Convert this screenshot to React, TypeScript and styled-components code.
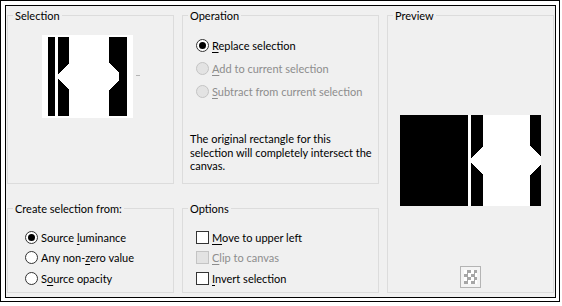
import React from 'react'
import styled, { createGlobalStyle } from 'styled-components'

const GlobalStyle = createGlobalStyle`
	*, *::before, *::after {
		box-sizing: border-box;
	}
	html, body {
		margin: 0;
		padding: 0;
		background: #fff;
	}
	body {
		font-family: Lato, 'Noto Sans', sans-serif;
		font-size: 11px;
		color: #000;
	}
`

type Choice = {
	label: React.ReactNode
	checked?: boolean
	disabled?: boolean
}

const operations: Choice[] = [
	{ label: <><u>R</u>eplace selection</>, checked: true },
	{ label: <><u>A</u>dd to current selection</>, disabled: true },
	{ label: <><u>S</u>ubtract from current selection</>, disabled: true }
]

const sources: Choice[] = [
	{ label: <>Source <u>l</u>uminance</>, checked: true },
	{ label: <>Any non-<u>z</u>ero value</> },
	{ label: <>S<u>o</u>urce opacity</> }
]

const options: Choice[] = [
	{ label: <><u>M</u>ove to upper left</> },
	{ label: <><u>C</u>lip to canvas</>, disabled: true },
	{ label: <><u>I</u>nvert selection</> }
]

const ThumbImage = () => (
	<svg width='91' height='83' viewBox='0 0 91 83' shapeRendering='crispEdges'>
		<rect width='91' height='83' fill='#fff' />
		<rect x='6' y='2' width='7' height='79' fill='#000' />
		<rect x='16' y='2' width='11' height='79' fill='#000' />
		<rect x='67' y='2' width='18' height='79' fill='#000' />
		<polygon points='27,28 15,41 15,42 27,55 67,55 77,45 77,38 67,28' fill='#fff' />
	</svg>
)

const PreviewImage = () => (
	<svg width='141' height='91' viewBox='0 0 141 91' shapeRendering='crispEdges'>
		<rect width='141' height='91' fill='#000' />
		<rect x='68' y='0' width='3' height='91' fill='#fff' />
		<rect x='83' y='0' width='47' height='91' fill='#fff' />
		<polygon points='83,31 69,45 69,46 83,60 130,60 141,50 141,42 130,31' fill='#fff' />
	</svg>
)

const SelectionDialog = () => (
	<Frame>
		<Dialog>
			<Group $area='sel'>
				<Legend>Selection</Legend>
				<Body $pad='12px 0 0 34px'>
					<ThumbRow>
						<ThumbImage />
						<DropMark />
					</ThumbRow>
				</Body>
			</Group>

			<Group $area='op'>
				<Legend>Operation</Legend>
				<Body $pad='11px 0 0 7px'>
					<ChoiceList $indent={6}>
						{operations.map((o, i) => (
							<ChoiceRow key={i} $height={23} $disabled={o.disabled}>
								<RadioMark $checked={o.checked} $disabled={o.disabled} />
								<span>{o.label}</span>
							</ChoiceRow>
						))}
					</ChoiceList>
					<Description>
						The original rectangle for this
						<br />
						selection will completely intersect the
						<br />
						canvas.
					</Description>
				</Body>
			</Group>

			<Group $area='prev'>
				<Legend>Preview</Legend>
				<PreviewBody>
					<PreviewBox>
						<PreviewImage />
					</PreviewBox>
					<CheckerButton>
						<Checker />
					</CheckerButton>
				</PreviewBody>
			</Group>

			<Group $area='src'>
				<Legend>Create selection from:</Legend>
				<Body $pad='11px 0 0 17px'>
					<ChoiceList $indent={0}>
						{sources.map((o, i) => (
							<ChoiceRow key={i} $height={20.5} $disabled={o.disabled}>
								<RadioMark $checked={o.checked} $disabled={o.disabled} />
								<span>{o.label}</span>
							</ChoiceRow>
						))}
					</ChoiceList>
				</Body>
			</Group>

			<Group $area='opt'>
				<Legend>Options</Legend>
				<Body $pad='11px 0 0 13px'>
					<ChoiceList $indent={0}>
						{options.map((o, i) => (
							<ChoiceRow key={i} $height={20.5} $disabled={o.disabled}>
								<CheckMark $disabled={o.disabled} />
								<span>{o.label}</span>
							</ChoiceRow>
						))}
					</ChoiceList>
				</Body>
			</Group>
		</Dialog>
	</Frame>
)

const App = () => (
	<>
		<GlobalStyle />
		<SelectionDialog />
	</>
)

const Frame = styled.div`
	width: 560px;
	height: 302px;
	border: 1px solid #000;
	padding: 4px 3px 3px 4px;
	display: flex;
	background: #fff;
`

const Dialog = styled.div`
	flex: 1;
	border: 1px solid #000;
	background: #f0f0f0;
	display: grid;
	grid-template-columns: 167px 197px 167px;
	grid-template-rows: 176px 92px;
	grid-template-areas:
		'sel op prev'
		'src opt prev';
	column-gap: 8px;
	row-gap: 17px;
	padding: 2px 1px 4px 1px;
`

const Group = styled.fieldset<{ $area: string }>`
	grid-area: ${(p) => p.$area};
	margin: 0;
	min-width: 0;
	border: 1px solid #dcdcdc;
	padding: 0;
	display: flex;
	flex-direction: column;
`

const Legend = styled.legend`
	margin-left: 5px;
	padding: 0 2px;
	font-size: 12px;
	line-height: 15px;
	font-size: 11px;
`

const Body = styled.div<{ $pad: string }>`
	flex: 1;
	display: flex;
	flex-direction: column;
	align-items: flex-start;
	padding: ${(p) => p.$pad};
`

const PreviewBody = styled.div`
	flex: 1;
	display: flex;
	flex-direction: column;
	align-items: center;
`

const ThumbRow = styled.div`
	display: flex;
	align-items: center;
	gap: 3px;

	svg {
		display: block;
	}
`

const DropMark = styled.span`
	width: 4px;
	height: 1px;
	background: #b4b4b4;
	margin-top: -2px;
`

const ChoiceList = styled.div<{ $indent: number }>`
	display: flex;
	flex-direction: column;
	margin-left: ${(p) => p.$indent}px;
`

const ChoiceRow = styled.label<{ $height: number; $disabled?: boolean }>`
	display: flex;
	align-items: center;
	gap: 3px;
	height: ${(p) => p.$height}px;
	color: ${(p) => (p.$disabled ? '#8d8d8d' : '#000')};
	white-space: nowrap;

	u {
		text-underline-offset: 2px;
	}
`

const RadioMark = styled.span<{ $checked?: boolean; $disabled?: boolean }>`
	flex: none;
	width: 13px;
	height: 13px;
	border-radius: 50%;
	border: 1px solid ${(p) => (p.$disabled ? '#c4c4c4' : '#333')};
	background: ${(p) => (p.$disabled ? '#e3e3e3' : '#fff')};
	display: flex;
	align-items: center;
	justify-content: center;

	&::after {
		content: '';
		display: ${(p) => (p.$checked ? 'block' : 'none')};
		width: 7px;
		height: 7px;
		border-radius: 50%;
		background: #000;
	}
`

const CheckMark = styled.span<{ $disabled?: boolean }>`
	flex: none;
	width: 13px;
	height: 13px;
	border: 1px solid ${(p) => (p.$disabled ? '#c4c4c4' : '#333')};
	background: ${(p) => (p.$disabled ? '#e3e3e3' : '#fff')};
`

const Description = styled.p`
	margin: 29px 0 0 0;
	line-height: 13.5px;
	white-space: nowrap;
`

const PreviewBox = styled.div`
	margin-top: 92px;

	svg {
		display: block;
	}
`

const CheckerButton = styled.div`
	margin-top: auto;
	margin-bottom: 4px;
	width: 21px;
	height: 22px;
	border: 1px solid #b4b4b4;
	background: #f4f4f4;
	padding: 3px;
	display: flex;
`

const Checker = styled.span`
	flex: 1;
	background-color: #fff;
	background-image: conic-gradient(#a6a6a6 25%, #fff 0 50%, #a6a6a6 0 75%, #fff 0);
	background-size: 7px 7px;
`

export default App
